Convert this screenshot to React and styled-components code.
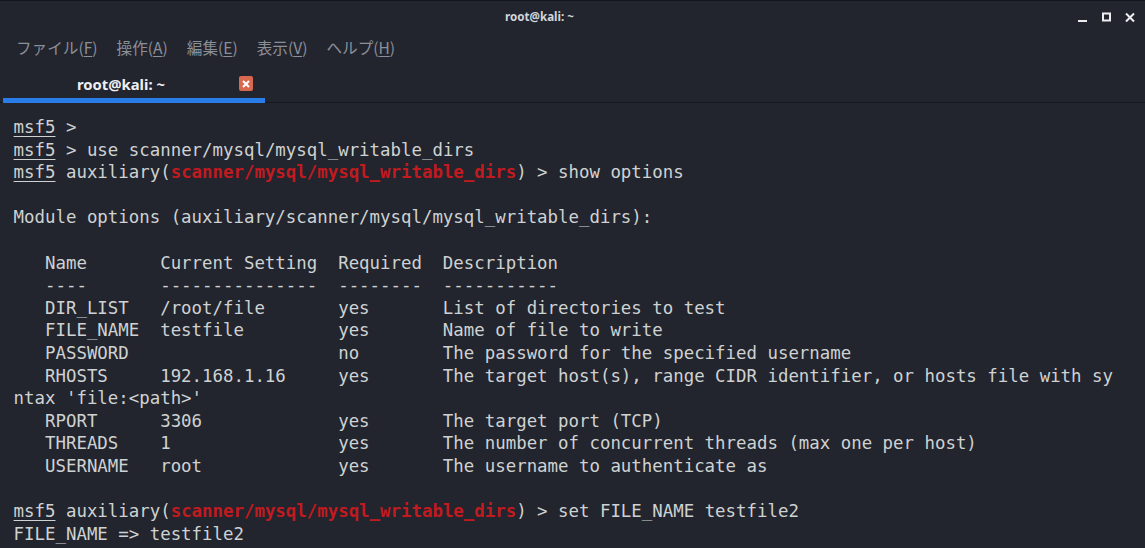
import styled, { createGlobalStyle } from "styled-components";

const GlobalStyle = createGlobalStyle`
  html, body { margin: 0; padding: 0; background: #22252e; overflow: hidden; }
`;

const Window = styled.div`
  width: 1145px;
  height: 548px;
  display: flex;
  flex-direction: column;
  overflow: hidden;
  background: #22252e;
  border-top: 1px solid #14161b;
  box-sizing: border-box;
`;

const TitleBar = styled.div`
  height: 31px;
  flex: none;
  display: flex;
  align-items: center;
  justify-content: center;
  padding-right: 66px;
  position: relative;
`;

const TitleText = styled.div`
  font: 700 11.6px "Noto Sans", sans-serif;
  color: #d3d6db;
`;

const WindowButtons = styled.div`
  position: absolute;
  right: 10px;
  top: 10px;
  display: flex;
  gap: 14px;
  align-items: center;
`;

const MenuBar = styled.div`
  height: 37px;
  flex: none;
  display: flex;
  align-items: center;
  gap: 19px;
  padding-left: 16px;
  padding-bottom: 7px;
  box-sizing: border-box;
`;

const MenuItem = styled.div`
  font: 400 15.6px "Noto Sans CJK JP", "Noto Sans", sans-serif;
  color: #8b8f98;
  u { text-underline-offset: 2px; }
`;

const TabBar = styled.div`
  height: 34px;
  flex: none;
  display: flex;
  border-bottom: 1px solid #16181e;
  box-sizing: border-box;
`;

const Tab = styled.div`
  width: 262px;
  margin-left: 3px;
  height: 34px;
  flex: none;
  box-sizing: border-box;
  border-bottom: 5px solid #2a7de8;
  display: flex;
  align-items: center;
  padding-left: 74px;
`;

const TabLabel = styled.div`
  width: 162px;
  font: 700 14.8px "Noto Sans", sans-serif;
  color: #eef0f3;
`;

const TabClose = styled.div`
  width: 14px;
  height: 15px;
  border-radius: 2px;
  background: #d9694e;
  display: flex;
  align-items: center;
  justify-content: center;
`;

const Terminal = styled.div`
  flex: 1;
  padding: 13px 0 0 13.6px;
  overflow: hidden;
  font: 400 17.4px/22.6px "DejaVu Sans Mono", monospace;
  color: #cfd2d2;
`;

const Line = styled.div`
  height: 22.6px;
  white-space: pre;
`;

const Prompt = styled.span`
  text-decoration: underline;
  text-underline-offset: 3px;
`;

const Module = styled.span`
  color: #c11a1f;
  font-weight: 700;
`;

const menus = [
  ["ファイル(", "F"],
  ["操作(", "A"],
  ["編集(", "E"],
  ["表示(", "V"],
  ["ヘルプ(", "H"],
];

const mod = "scanner/mysql/mysql_writable_dirs";

const plain = (text) => <Line>{text || " "}</Line>;

export default function App() {
  return (
    <>
      <GlobalStyle />
      <Window>
        <TitleBar>
          <TitleText>root@kali: ~</TitleText>
          <WindowButtons>
            <svg width="10" height="12" viewBox="0 0 10 12">
              <rect x="0" y="9" width="9" height="2" fill="#eceef0" />
            </svg>
            <svg width="9" height="11" viewBox="0 0 9 11">
              <rect x="1" y="1.5" width="7" height="7" fill="none" stroke="#eceef0" strokeWidth="2" />
            </svg>
            <svg width="10" height="11" viewBox="0 0 10 11">
              <path d="M1 1.5l8 8M9 1.5l-8 8" stroke="#eceef0" strokeWidth="2" fill="none" />
            </svg>
          </WindowButtons>
        </TitleBar>
        <MenuBar>
          {menus.map(([label, key]) => (
            <MenuItem key={key}>
              {label}
              <u>{key}</u>)
            </MenuItem>
          ))}
        </MenuBar>
        <TabBar>
          <Tab>
            <TabLabel>root@kali: ~</TabLabel>
            <TabClose>
              <svg width="8" height="8" viewBox="0 0 8 8">
                <path d="M1 1l6 6M7 1l-6 6" stroke="#fff" strokeWidth="2" fill="none" />
              </svg>
            </TabClose>
          </Tab>
        </TabBar>
        <Terminal>
          <Line><Prompt>msf5</Prompt> &gt;</Line>
          <Line><Prompt>msf5</Prompt> &gt; use {mod}</Line>
          <Line><Prompt>msf5</Prompt> auxiliary(<Module>{mod}</Module>) &gt; show options</Line>
          {plain("")}
          {plain("Module options (auxiliary/scanner/mysql/mysql_writable_dirs):")}
          {plain("")}
          {plain("   Name       Current Setting  Required  Description")}
          {plain("   ----       ---------------  --------  -----------")}
          {plain("   DIR_LIST   /root/file       yes       List of directories to test")}
          {plain("   FILE_NAME  testfile         yes       Name of file to write")}
          {plain("   PASSWORD                    no        The password for the specified username")}
          {plain("   RHOSTS     192.168.1.16     yes       The target host(s), range CIDR identifier, or hosts file with sy")}
          {plain("ntax 'file:<path>'")}
          {plain("   RPORT      3306             yes       The target port (TCP)")}
          {plain("   THREADS    1                yes       The number of concurrent threads (max one per host)")}
          {plain("   USERNAME   root             yes       The username to authenticate as")}
          {plain("")}
          <Line><Prompt>msf5</Prompt> auxiliary(<Module>{mod}</Module>) &gt; set FILE_NAME testfile2</Line>
          {plain("FILE_NAME => testfile2")}
        </Terminal>
      </Window>
    </>
  );
}
